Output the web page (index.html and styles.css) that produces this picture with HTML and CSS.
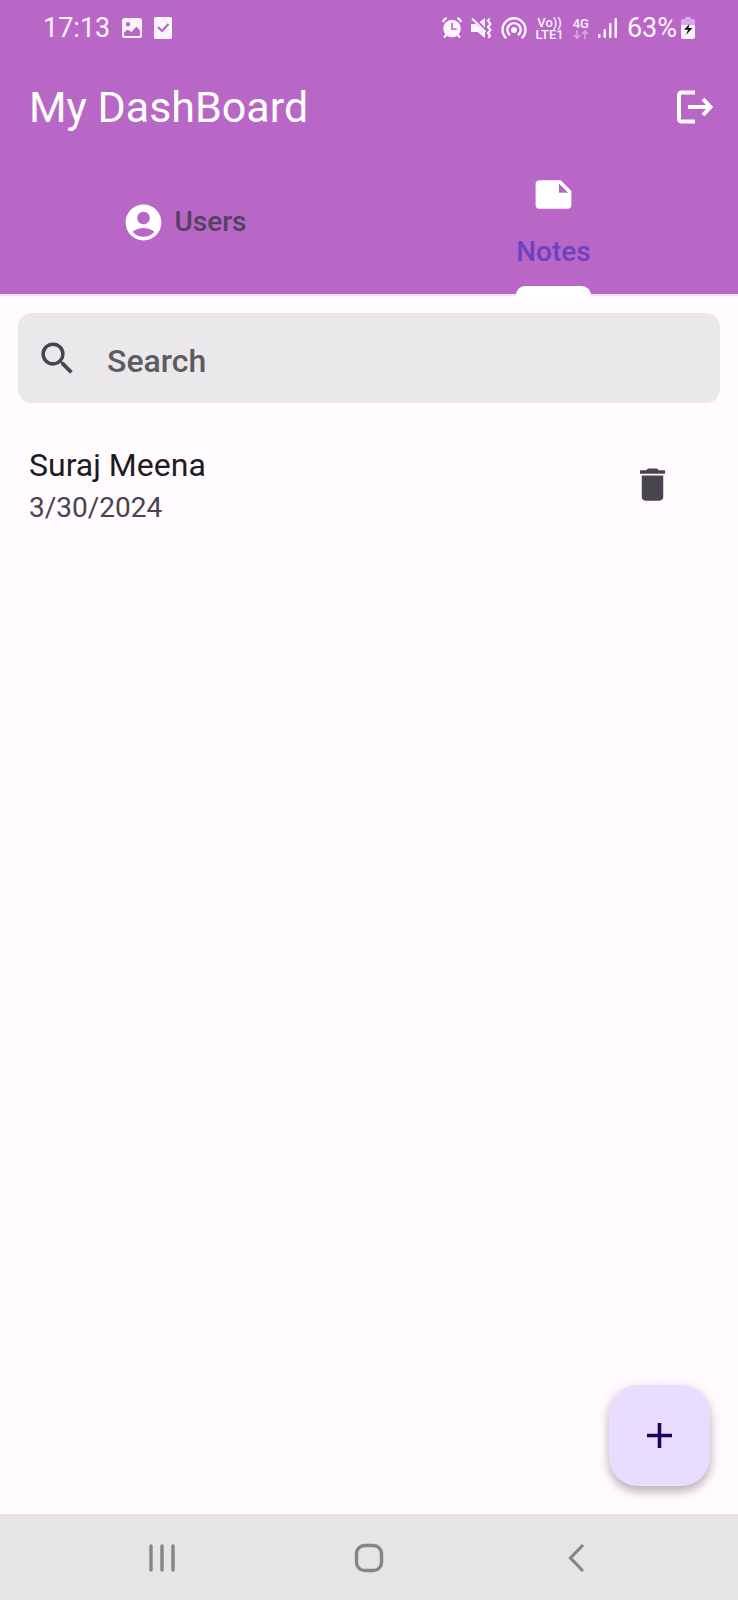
FILE: index.html
```html
<!DOCTYPE html>
<html lang="en">
<head>
<meta charset="utf-8">
<meta name="viewport" content="width=device-width, initial-scale=1">
<title>My DashBoard</title>
<link rel="stylesheet" href="styles.css">
</head>
<body>
<div class="app">
  <header class="header">
    <div class="status">
      <div class="status-left">
        <span>17:13</span>
        <svg width="20" height="20" viewBox="0 0 20 20"><path fill="currentColor" fill-rule="evenodd" d="M2.500 0h15A2.500 2.500 0 0 1 20 2.500v15a2.500 2.500 0 0 1-2.500 2.500h-15A2.500 2.500 0 0 1 0 17.500v-15A2.500 2.500 0 0 1 2.500 0zM2 14.500V18h16v-5.500L14.500 8.500 9.500 14 5.500 11.500zM6 4a2.200 2.200 0 1 0 0 4.400A2.200 2.200 0 0 0 6 4z"/></svg>
        <svg width="18" height="22" viewBox="0 0 18 22"><rect width="18" height="22" rx="1.500" fill="currentColor"/><path d="M4 10l4 4 6.500-7" fill="none" stroke="#b867c7" stroke-width="2.200"/></svg>
      </div>
      <div class="status-right">
        <svg width="20" height="22" viewBox="0 0 20 22" fill="none" stroke="currentColor"><circle cx="10" cy="11.500" r="8.800" fill="currentColor" stroke="none"/><path d="M.8 5C1.500 3 3 1.700 4.800 1M19.200 5C18.500 3 17 1.700 15.200 1M4.500 17.500l-2.500 3M15.500 17.500l2.500 3" stroke-width="2.200"/><path d="M10 6v6h4.500" stroke="#b867c7" stroke-width="1.600"/></svg>
        <svg width="21" height="22" viewBox="0 0 21 22"><path d="M0 7h5l9 8.500V21L6.500 15H0zM8.500 5L14 1v9.500z" fill="currentColor"/><path d="M1 1.500L14.500 15" fill="none" stroke="currentColor" stroke-width="2"/><path d="M18.500 1.500L17 4l2.500 3L17 10l2.500 3L17 16l2 2.500-1.500 2.500" fill="none" stroke="currentColor" stroke-width="2.200"/></svg>
        <svg width="26" height="22" viewBox="0 0 26 22" fill="none" stroke="currentColor" stroke-width="2.400"><circle cx="13" cy="13" r="3" fill="currentColor" stroke="none"/><path d="M9 18.200a6.700 6.700 0 1 1 8 0M5.200 21.200a11.500 11.500 0 1 1 15.600 0"/></svg>
        <span class="mini"><span>Vo))</span><span>LTE1</span></span>
        <span class="mini"><span>4G</span><svg width="16" height="9" viewBox="0 0 16 9"><path d="M4 0v8M1 5l3 3 3-3M12 9V1M9 4l3-3 3 3" fill="none" stroke="#dda6ea" stroke-width="1.600"/></svg></span>
        <svg width="20" height="22" viewBox="0 0 20 22" fill="currentColor"><rect y="17" width="2.500" height="4" rx="1"/><rect x="5.500" y="12" width="2.500" height="9" rx="1"/><rect x="11" y="6" width="2.500" height="15" rx="1"/><rect x="16.500" y="1" width="2.500" height="20" rx="1"/></svg>
        <span class="battery"><span>63%</span><svg width="14" height="22" viewBox="0 0 14 22"><path d="M4 0h6v2h2a2 2 0 0 1 2 2v5H0V4a2 2 0 0 1 2-2h2z" fill="#dda6ea"/><path d="M0 8h14v12a2 2 0 0 1-2 2H2a2 2 0 0 1-2-2z" fill="currentColor"/><path d="M8.500 7L3 12.800h4L5 18l6.500-7H7.500z" fill="#111"/></svg></span>
      </div>
    </div>
    <div class="bar">
      <h1 class="title">My DashBoard</h1>
      <button class="icon-button" type="button" aria-label="Log out">
        <svg width="36" height="34" viewBox="0 0 36 34" fill="none" stroke="currentColor" stroke-width="4"><path d="M18 2.500H5Q2 2.500 2 5.500v23q0 3 3 3h13M11 17h22M26 9l7.500 8-7.500 8"/></svg>
      </button>
    </div>
    <nav class="tabs" role="tablist">
      <button class="tab" type="button" role="tab" aria-selected="false">
        <svg width="43" height="43" viewBox="0 0 24 24"><path fill="#fff" d="M12 2C6.480 2 2 6.480 2 12s4.480 10 10 10 10-4.480 10-10S17.520 2 12 2zm0 4c1.930 0 3.500 1.570 3.500 3.500S13.930 13 12 13s-3.500-1.570-3.500-3.500S10.070 6 12 6zm0 14c-2.030 0-4.430-.82-6.140-2.880C7.550 15.800 9.680 15 12 15s4.450.8 6.140 2.120C16.430 19.180 14.030 20 12 20z"/></svg>
        <span>Users</span>
      </button>
      <button class="tab tab-stacked" type="button" role="tab" aria-selected="true">
        <svg width="43" height="43" viewBox="0 0 24 24"><path fill="#fff" fill-rule="evenodd" d="M16 4H4c-1.100 0-2 .9-2 2v12c0 1.100.9 2 2 2h16c1.100 0 2-.9 2-2v-8zM15 5.800l5.200 5.200H15z"/></svg>
        <span class="tab-label">Notes</span>
      </button>
    </nav>
  </header>
  <main class="content">
    <label class="search">
      <svg width="43" height="43" viewBox="0 0 24 24"><path fill="#48454e" d="M15.500 14h-.79l-.28-.27A6.470 6.470 0 0 0 16 9.500 6.500 6.500 0 1 0 9.500 16c1.610 0 3.090-.59 4.230-1.570l.27.28v.79l5 4.990L20.490 19zm-6 0C7.010 14 5 11.990 5 9.500S7.010 5 9.500 5 14 7.010 14 9.500 11.990 14 9.500 14z"/></svg>
      <input type="text" placeholder="Search" aria-label="Search">
    </label>
    <ul class="notes">
      <li class="note">
        <div class="note-text">
          <div class="note-name">Suraj Meena</div>
          <div class="note-date">3/30/2024</div>
        </div>
        <button class="delete" type="button" aria-label="Delete">
          <svg width="43" height="43" viewBox="0 0 24 24"><path fill="#48454e" d="M6 19c0 1.100.9 2 2 2h8c1.100 0 2-.9 2-2V7H6zM19 4h-3.500l-1-1h-5l-1 1H5v2h14z"/></svg>
        </button>
      </li>
    </ul>
    <button class="fab" type="button" aria-label="Add note">
      <svg width="43" height="43" viewBox="0 0 24 24"><path fill="#22005d" d="M19 13h-6v6h-2v-6H5v-2h6V5h2v6h6z"/></svg>
    </button>
  </main>
  <footer class="system-nav">
    <button type="button" aria-label="Recents"><svg width="26" height="28" viewBox="0 0 26 28"><path d="M2 2v24M13 2v24M24 2v24" fill="none" stroke="#858585" stroke-width="3.400" stroke-linecap="round"/></svg></button>
    <button type="button" aria-label="Home"><svg width="30" height="30" viewBox="0 0 30 30"><rect x="2.500" y="2.500" width="25" height="25" rx="8" fill="none" stroke="#858585" stroke-width="3.400"/></svg></button>
    <button type="button" aria-label="Back"><svg width="16" height="28" viewBox="0 0 16 28"><path d="M14 2L2.500 14 14 26" fill="none" stroke="#858585" stroke-width="3.200" stroke-linecap="round"/></svg></button>
  </footer>
</div>
</body>
</html>
```
FILE: styles.css
```css
* { box-sizing: border-box; }
body {
  margin: 0;
  font-family: Roboto, "Liberation Sans", sans-serif;
  background: #fffbff;
  color: #1c1b1e;
}
button {
  display: flex;
  align-items: center;
  justify-content: center;
  padding: 0;
  border: 0;
  background: none;
  color: inherit;
  font: inherit;
}
svg { display: block; flex: none; }
.app { display: flex; flex-direction: column; min-height: 100vh; }
.header {
  background: #b867c7;
  color: #fff;
  border-bottom: 2px solid #efdff7;
}
.status {
  display: flex;
  justify-content: space-between;
  align-items: center;
  height: 56px;
  padding: 0 43px;
  font-size: 27px;
  color: #fdf3ff;
}
.status-left { display: flex; align-items: center; gap: 12px; }
.status-right { display: flex; align-items: center; gap: 9px; }
.mini {
  display: flex;
  flex-direction: column;
  align-items: center;
  gap: 1px;
  font-size: 13px;
  font-weight: 500;
  line-height: 11px;
}
.battery { display: flex; align-items: center; gap: 4px; }
.bar {
  display: flex;
  justify-content: space-between;
  align-items: center;
  height: 102px;
  padding: 0 25px 0 29px;
}
.title { margin: 0; font-size: 43px; font-weight: 400; line-height: 56px; }
.tabs { display: grid; grid-template-columns: 1fr 1fr; padding-bottom: 8px; }
.tab {
  height: 128px;
  gap: 9px;
  font-size: 28px;
  font-weight: 500;
  line-height: 40px;
  color: #55405f;
}
.tab-stacked { flex-direction: column; gap: 16px; color: #6d41c0; }
.tab-label { position: relative; }
.tab-label::after {
  content: "";
  position: absolute;
  left: 0;
  right: 0;
  top: 54px;
  height: 10px;
  border-radius: 9px 9px 0 0;
  background: #fff;
}
.content { position: relative; flex: 1; padding: 17px 18px; }
.search {
  display: flex;
  align-items: center;
  gap: 28px;
  height: 90px;
  padding: 0 18px;
  border-radius: 14px;
  background: #ebe8eb;
}
.search input {
  flex: 1;
  min-width: 0;
  padding: 6px 0 0;
  border: 0;
  outline: 0;
  background: none;
  font: 500 32px/40px Roboto, "Liberation Sans", sans-serif;
  color: #1c1b1e;
}
.search input::placeholder { color: #5d5b5f; opacity: 1; }
.notes { margin: 38px 0 0; padding: 0; list-style: none; }
.note {
  display: flex;
  align-items: center;
  justify-content: space-between;
  padding: 0 25px 0 11px;
}
.note-name { font-size: 32px; line-height: 48px; }
.note-date { font-size: 28px; line-height: 38px; color: #48454e; }
.delete { width: 86px; height: 86px; }
.fab {
  position: absolute;
  right: 28px;
  bottom: 28px;
  width: 101px;
  height: 101px;
  border-radius: 29px;
  background: #e9ddff;
  box-shadow: 0 6px 10px rgba(0, 0, 0, 0.22), 0 2px 14px rgba(0, 0, 0, 0.1);
}
.system-nav {
  display: grid;
  grid-template-columns: repeat(3, 1fr);
  height: 86px;
  padding: 2px 58px 0;
  background: #e5e5e5;
}
```
